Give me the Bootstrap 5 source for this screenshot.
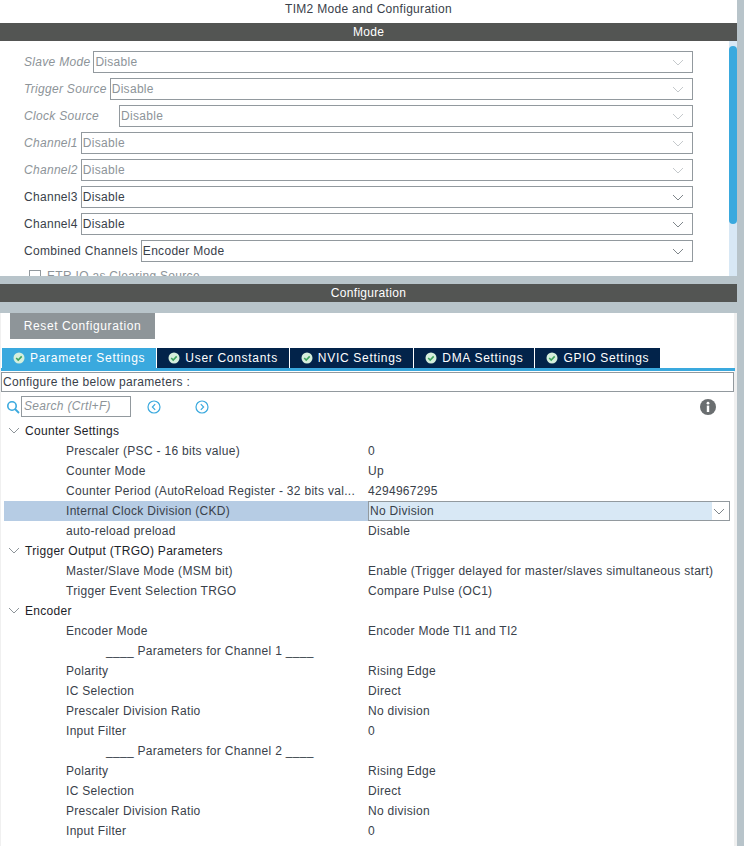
<!DOCTYPE html>
<html lang="en">
<head>
  <meta charset="UTF-8">
  <meta name="viewport" content="width=device-width, initial-scale=1.0">
  <title>TIM2 Mode and Configuration</title>
  <link href="https://cdn.jsdelivr.net/npm/bootstrap@5.3.0/dist/css/bootstrap.min.css" rel="stylesheet">
  <style>
    html, body { height: 846px; overflow: hidden; }
    body { font-family: "Liberation Sans", Arial, sans-serif; font-size: 12px; color: #39414a; background: #b8c4ca; letter-spacing: .3px; }
    .shell { width: 744px; height: 846px; }
    .main-col { width: 737px; }
    .side-col { width: 7px; }
    .title-bar { height: 23px; line-height: 18px; background: #fff; }
    .section-bar { height: 18px; line-height: 18px; background: #535553; color: #fff; }
    .mode-pane { height: 235px; background: #fff; overflow: hidden; }
    .mode-list { width: 729px; padding: 10px 36px 0 24px; }
    .mode-row { height: 22px; margin-bottom: 5px; white-space: nowrap; }
    .mode-row.is-off { color: #8d9499; }
    .mode-row.is-off .mode-label { font-style: italic; }
    .mode-label { flex: none; padding-right: 3px; }
    .fake-select { flex: 1; height: 22px; line-height: 20px; padding-left: 1px; border: 1px solid #92999e; background: #fff; }
    .chev { flex: none; width: 12px; height: 7px; }
    .etr-row { color: #8d9499; padding-left: 5px; margin-top: 4px; }
    .etr-box { display: inline-block; width: 12px; height: 12px; border: 1px solid #92999e; margin-right: 6px; vertical-align: -2px; }
    .scroll-track { width: 8px; background: #d8e8f5; }
    .scroll-thumb { height: 178px; margin-top: 5px; background: #3aa9de; border-radius: 4px; }
    .splitter { height: 8px; }
    .config-pane { height: 544px; background: #fff; border-left: 1px solid #f0f0f0; border-right: 3px solid #f0f0f0; border-bottom: 1px solid #f0f0f0; }
    .reset-btn { width: 145px; height: 26px; margin: 11px 0 9px 9px; background: #8e9599; color: #fff; line-height: 26px; letter-spacing: .6px; }
    .tab-strip { height: 20px; padding-left: 1px; gap: 1px; }
    .tab-item { height: 20px; line-height: 20px; padding: 0 11px; background: #02234a; color: #fff; letter-spacing: .7px; white-space: nowrap; }
    .tab-item.is-active { background: #3aa9de; }
    .tab-item svg { width: 12px; height: 12px; margin-right: 5px; vertical-align: -2px; }
    .tab-rule { height: 3px; background: #3aa9de; margin-right: -1px; }
    .hint-box { height: 20px; line-height: 18px; margin: 1px 0 0 0; padding-left: 1px; border: 1px solid #92999e; }
    .search-row { height: 29px; padding-left: 5px; }
    .search-box { width: 110px; height: 21px; line-height: 19px; margin-left: 1px; padding-left: 2px; border: 1px solid #92999e; color: #8d9499; font-style: italic; }
    .nav-dot { width: 14px; height: 14px; }
    .tree-row { height: 20px; line-height: 20px; white-space: nowrap; }
    .tree-head { color: #1c2228; padding-left: 7px; }
    .tree-head svg { width: 12px; height: 7px; margin-right: 5px; vertical-align: 1px; }
    .tree-label { width: 367px; padding-left: 65px; flex: none; overflow: hidden; }
    .tree-sub { padding-left: 105px; }
    .tree-row.is-picked .tree-label { background: #b6cce4; margin-left: 3px; width: 364px; padding-left: 62px; }
    .tree-row.is-picked .fake-select { flex: none; width: 362px; height: 20px; line-height: 18px; background: linear-gradient(to right, #d8e8f5 343px, #fff 343px); }
  </style>
</head>
<body>
<div class="shell d-flex">
  <div class="main-col">
    <div class="title-bar text-center">TIM2 Mode and Configuration</div>
    <div class="section-bar text-center">Mode</div>

    <div class="mode-pane d-flex">
      <div class="mode-list">
        <div class="mode-row is-off d-flex align-items-center"><span class="mode-label">Slave Mode</span><div class="fake-select d-flex align-items-center justify-content-between pe-2">Disable<svg class="chev" viewBox="0 0 12 7"><path d="M1 1l5 5 5-5" fill="none" stroke="#c5c9cc"/></svg></div></div>
        <div class="mode-row is-off d-flex align-items-center"><span class="mode-label">Trigger Source</span><div class="fake-select d-flex align-items-center justify-content-between pe-2">Disable<svg class="chev" viewBox="0 0 12 7"><path d="M1 1l5 5 5-5" fill="none" stroke="#c5c9cc"/></svg></div></div>
        <div class="mode-row is-off d-flex align-items-center"><span class="mode-label" style="width:95px">Clock Source</span><div class="fake-select d-flex align-items-center justify-content-between pe-2">Disable<svg class="chev" viewBox="0 0 12 7"><path d="M1 1l5 5 5-5" fill="none" stroke="#c5c9cc"/></svg></div></div>
        <div class="mode-row is-off d-flex align-items-center"><span class="mode-label">Channel1</span><div class="fake-select d-flex align-items-center justify-content-between pe-2">Disable<svg class="chev" viewBox="0 0 12 7"><path d="M1 1l5 5 5-5" fill="none" stroke="#c5c9cc"/></svg></div></div>
        <div class="mode-row is-off d-flex align-items-center"><span class="mode-label">Channel2</span><div class="fake-select d-flex align-items-center justify-content-between pe-2">Disable<svg class="chev" viewBox="0 0 12 7"><path d="M1 1l5 5 5-5" fill="none" stroke="#c5c9cc"/></svg></div></div>
        <div class="mode-row d-flex align-items-center"><span class="mode-label">Channel3</span><div class="fake-select d-flex align-items-center justify-content-between pe-2">Disable<svg class="chev" viewBox="0 0 12 7"><path d="M1 1l5 5 5-5" fill="none" stroke="#7f868b"/></svg></div></div>
        <div class="mode-row d-flex align-items-center"><span class="mode-label">Channel4</span><div class="fake-select d-flex align-items-center justify-content-between pe-2">Disable<svg class="chev" viewBox="0 0 12 7"><path d="M1 1l5 5 5-5" fill="none" stroke="#7f868b"/></svg></div></div>
        <div class="mode-row d-flex align-items-center"><span class="mode-label">Combined Channels</span><div class="fake-select d-flex align-items-center justify-content-between pe-2">Encoder Mode<svg class="chev" viewBox="0 0 12 7"><path d="M1 1l5 5 5-5" fill="none" stroke="#7f868b"/></svg></div></div>
        <div class="etr-row"><span class="etr-box"></span>ETR IO as Clearing Source</div>
      </div>
      <div class="scroll-track"><div class="scroll-thumb"></div></div>
    </div>

    <div class="splitter"></div>
    <div class="section-bar text-center">Configuration</div>

    <div class="config-pane">
      <div class="reset-btn text-center">Reset Configuration</div>

      <div class="tab-strip d-flex">
        <div class="tab-item is-active"><svg viewBox="0 0 12 12"><circle cx="6" cy="6" r="5.5" fill="#d5efdc"/><path d="M3.2 6l2 2 3.5-3.6" fill="none" stroke="#3fa45f" stroke-width="1.6"/></svg>Parameter Settings</div>
        <div class="tab-item"><svg viewBox="0 0 12 12"><circle cx="6" cy="6" r="5.5" fill="#d5efdc"/><path d="M3.2 6l2 2 3.5-3.6" fill="none" stroke="#3fa45f" stroke-width="1.6"/></svg>User Constants</div>
        <div class="tab-item"><svg viewBox="0 0 12 12"><circle cx="6" cy="6" r="5.5" fill="#d5efdc"/><path d="M3.2 6l2 2 3.5-3.6" fill="none" stroke="#3fa45f" stroke-width="1.6"/></svg>NVIC Settings</div>
        <div class="tab-item"><svg viewBox="0 0 12 12"><circle cx="6" cy="6" r="5.5" fill="#d5efdc"/><path d="M3.2 6l2 2 3.5-3.6" fill="none" stroke="#3fa45f" stroke-width="1.6"/></svg>DMA Settings</div>
        <div class="tab-item"><svg viewBox="0 0 12 12"><circle cx="6" cy="6" r="5.5" fill="#d5efdc"/><path d="M3.2 6l2 2 3.5-3.6" fill="none" stroke="#3fa45f" stroke-width="1.6"/></svg>GPIO Settings</div>
      </div>
      <div class="tab-rule"></div>
      <div class="hint-box">Configure the below parameters :</div>

      <div class="search-row d-flex align-items-center">
        <svg width="14" height="14" viewBox="0 0 14 14"><circle cx="6" cy="6" r="4.2" fill="none" stroke="#3aa9de" stroke-width="1.6"/><path d="M9 9l4 4" stroke="#3aa9de" stroke-width="1.8"/></svg>
        <div class="search-box">Search (Crtl+F)</div>
        <svg class="nav-dot ms-3" viewBox="0 0 14 14"><circle cx="7" cy="7" r="6" fill="none" stroke="#3aa9de" stroke-width="1.2"/><path d="M8.2 4.2L5.4 7l2.8 2.8" fill="none" stroke="#3aa9de" stroke-width="1.2"/></svg>
        <svg class="nav-dot" style="margin-left:34px" viewBox="0 0 14 14"><circle cx="7" cy="7" r="6" fill="none" stroke="#3aa9de" stroke-width="1.2"/><path d="M5.8 4.2L8.6 7l-2.8 2.8" fill="none" stroke="#3aa9de" stroke-width="1.2"/></svg>
        <svg class="ms-auto" style="margin-right:18px" width="16" height="16" viewBox="0 0 16 16"><circle cx="8" cy="8" r="8" fill="#6a6e70"/><rect x="6.8" y="6.6" width="2.4" height="6.4" fill="#fff"/><circle cx="8" cy="4.2" r="1.4" fill="#fff"/></svg>
      </div>

      <div class="tree-row tree-head"><svg viewBox="0 0 12 7"><path d="M1 1l5 5 5-5" fill="none" stroke="#8d9499"/></svg>Counter Settings</div>
      <div class="tree-row d-flex"><div class="tree-label">Prescaler (PSC - 16 bits value)</div><div>0</div></div>
      <div class="tree-row d-flex"><div class="tree-label">Counter Mode</div><div>Up</div></div>
      <div class="tree-row d-flex"><div class="tree-label">Counter Period (AutoReload Register - 32 bits val...</div><div>4294967295</div></div>
      <div class="tree-row is-picked d-flex"><div class="tree-label">Internal Clock Division (CKD)</div><div class="fake-select d-flex align-items-center justify-content-between pe-1">No Division<svg class="chev" viewBox="0 0 12 7"><path d="M1 1l5 5 5-5" fill="none" stroke="#7f868b"/></svg></div></div>
      <div class="tree-row d-flex"><div class="tree-label">auto-reload preload</div><div>Disable</div></div>
      <div class="tree-row tree-head"><svg viewBox="0 0 12 7"><path d="M1 1l5 5 5-5" fill="none" stroke="#8d9499"/></svg>Trigger Output (TRGO) Parameters</div>
      <div class="tree-row d-flex"><div class="tree-label">Master/Slave Mode (MSM bit)</div><div>Enable (Trigger delayed for master/slaves simultaneous start)</div></div>
      <div class="tree-row d-flex"><div class="tree-label">Trigger Event Selection TRGO</div><div>Compare Pulse (OC1)</div></div>
      <div class="tree-row tree-head"><svg viewBox="0 0 12 7"><path d="M1 1l5 5 5-5" fill="none" stroke="#8d9499"/></svg>Encoder</div>
      <div class="tree-row d-flex"><div class="tree-label">Encoder Mode</div><div>Encoder Mode TI1 and TI2</div></div>
      <div class="tree-row tree-sub">____ Parameters for Channel 1 ____</div>
      <div class="tree-row d-flex"><div class="tree-label">Polarity</div><div>Rising Edge</div></div>
      <div class="tree-row d-flex"><div class="tree-label">IC Selection</div><div>Direct</div></div>
      <div class="tree-row d-flex"><div class="tree-label">Prescaler Division Ratio</div><div>No division</div></div>
      <div class="tree-row d-flex"><div class="tree-label">Input Filter</div><div>0</div></div>
      <div class="tree-row tree-sub">____ Parameters for Channel 2 ____</div>
      <div class="tree-row d-flex"><div class="tree-label">Polarity</div><div>Rising Edge</div></div>
      <div class="tree-row d-flex"><div class="tree-label">IC Selection</div><div>Direct</div></div>
      <div class="tree-row d-flex"><div class="tree-label">Prescaler Division Ratio</div><div>No division</div></div>
      <div class="tree-row d-flex"><div class="tree-label">Input Filter</div><div>0</div></div>
    </div>
  </div>
  <div class="side-col"></div>
</div>
<script src="https://cdn.jsdelivr.net/npm/bootstrap@5.3.0/dist/js/bootstrap.bundle.min.js"></script>
</body>
</html>
